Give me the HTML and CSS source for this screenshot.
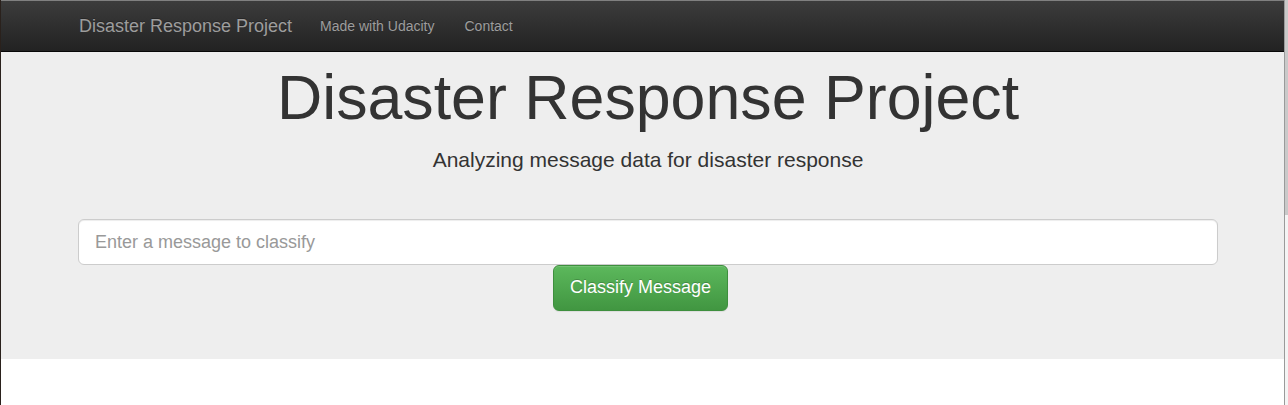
FILE: index.html
```html
<!DOCTYPE html>
<html lang="en">
<head>
<meta charset="utf-8">
<title>Disaster Response Project</title>
<link rel="stylesheet" href="styles.css">
</head>
<body>
<div class="window">
  <div class="page">
    <nav class="navbar">
      <div class="container nav-inner">
        <a class="brand" href="#">Disaster Response Project</a>
        <ul class="nav-links">
          <li><a href="#">Made with Udacity</a></li>
          <li><a href="#">Contact</a></li>
        </ul>
      </div>
    </nav>
    <div class="jumbotron">
      <div class="container">
        <h1 class="title">Disaster Response Project</h1>
        <p class="subtitle">Analyzing message data for disaster response</p>
        <form class="classify-form">
          <input class="input-lg" type="text" name="query" placeholder="Enter a message to classify">
          <div class="btn-row">
            <button type="button" class="btn-success">Classify Message</button>
          </div>
        </form>
      </div>
    </div>
    <div class="content"></div>
  </div>
  <div class="scrollbar"><div class="thumb"></div></div>
</div>
</body>
</html>
```

FILE: styles.css
```css
html, body {
  margin: 0;
  padding: 0;
  height: 100%;
  background: #fff;
}
body {
  font-family: "Liberation Sans", Arial, Helvetica, sans-serif;
  font-size: 14px;
  line-height: 1.42857;
  color: #333;
  overflow: hidden;
}
* { box-sizing: border-box; }

.window {
  display: flex;
  height: 405px;
  border-left: 1px solid #2a211c;
}
.page {
  flex: 1;
  min-width: 0;
  background: #fff;
}
.scrollbar {
  width: 4px;
  background: #f4f4f4;
  border-left: 1px solid #9a9a9a;
}
.thumb {
  height: 215px;
  background: #c9c9c9;
}

.container {
  width: 1140px;
  margin-left: 77px;
}

.navbar {
  height: 52px;
  border-top: 1px solid #808080;
  border-bottom: 1px solid #080808;
  background-image: linear-gradient(to bottom, #3c3c3c 0, #222 100%);
}
.nav-inner {
  display: flex;
  align-items: flex-start;
}
.brand {
  display: block;
  padding: 15px 13px 15px 1px;
  font-size: 18px;
  line-height: 20px;
  color: #9d9d9d;
  text-decoration: none;
  text-shadow: 0 -1px 0 rgba(0,0,0,.25);
}
.nav-links {
  display: flex;
  margin: 0;
  padding: 0;
  list-style: none;
}
.nav-links a {
  display: block;
  padding: 15px;
  font-size: 14px;
  line-height: 20px;
  color: #9d9d9d;
  text-decoration: none;
  text-shadow: 0 -1px 0 rgba(0,0,0,.25);
}

.jumbotron {
  background: #eee;
  padding: 11px 0 48px;
}
.title {
  margin: 0 0 13px;
  font-size: 62.7px;
  font-weight: 500;
  line-height: 69px;
  text-align: center;
  color: #333;
}
.subtitle {
  margin: 0 0 44px;
  font-size: 21px;
  line-height: 30px;
  text-align: center;
  color: #333;
}
.classify-form {
  margin: 0;
}
.input-lg {
  display: block;
  width: 100%;
  height: 46px;
  padding: 10px 16px;
  font-family: inherit;
  font-size: 18px;
  line-height: 1.33333;
  color: #555;
  background: #fff;
  border: 1px solid #ccc;
  border-radius: 6px;
  box-shadow: inset 0 1px 1px rgba(0,0,0,.075);
  outline: none;
}
.input-lg::placeholder {
  color: #999;
}
.btn-row {
  display: flex;
  padding-left: 475px;
}
.btn-success {
  display: block;
  height: 46px;
  padding: 10px 16px;
  font-family: inherit;
  font-size: 18px;
  line-height: 1.33333;
  color: #fff;
  background-image: linear-gradient(to bottom, #5cb85c 0, #419641 100%);
  border: 1px solid #3e8f3e;
  border-radius: 6px;
  text-shadow: 0 -1px 0 rgba(0,0,0,.2);
  box-shadow: inset 0 1px 0 rgba(255,255,255,.15), 0 1px 1px rgba(0,0,0,.075);
  cursor: pointer;
}
```
